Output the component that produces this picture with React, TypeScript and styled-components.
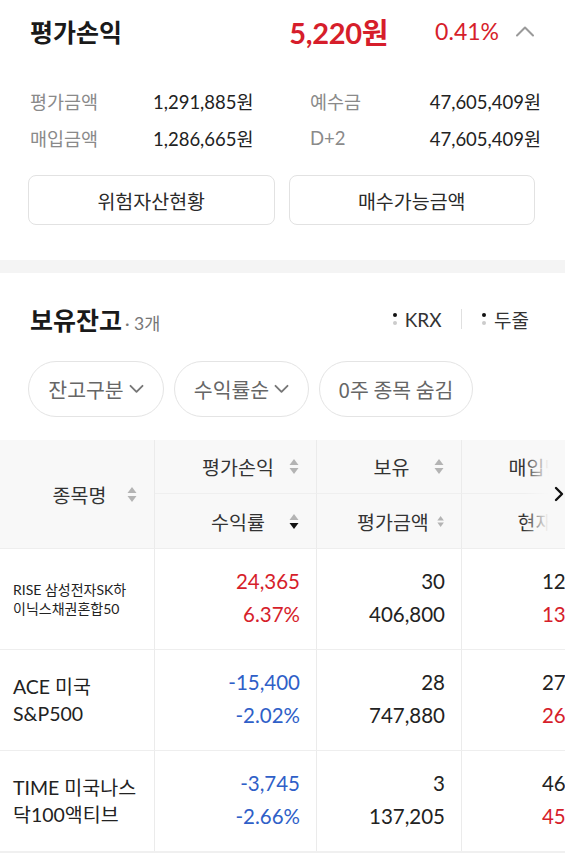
import React from 'react';
import styled, { createGlobalStyle } from 'styled-components';

const GlobalStyle = createGlobalStyle`
  html, body {
    margin: 0;
    padding: 0;
    background: #ffffff;
  }
  body {
    font-family: 'Lato', 'Noto Sans CJK KR', sans-serif;
    color: #222222;
    -webkit-font-smoothing: antialiased;
  }
`;

const RED = '#d61e2b';
const BLUE = '#2f5fc8';

const Page = styled.div`
  width: 565px;
  overflow: hidden;
`;

const Summary = styled.section`
  padding: 0 30px 35px 28px;
`;

const SummaryHead = styled.div`
  height: 62px;
  display: flex;
  align-items: center;
`;

const Title = styled.h2`
  flex: 1;
  margin: 0;
  padding-left: 2px;
  font-size: 25px;
  font-weight: 700;
  color: #1a1a1a;
`;

const ProfitAmount = styled.span`
  font-size: 29px;
  font-weight: 700;
  color: ${RED};
  letter-spacing: -0.3px;
`;

const ProfitRate = styled.span`
  margin-left: 47px;
  font-size: 23px;
  color: ${RED};
`;

const Collapse = styled.span`
  margin-left: 16px;
  display: flex;
  align-items: center;
`;

const Stats = styled.div`
  margin: 20px -6px 0 0;
  display: grid;
  grid-template-columns: 125px 155px 1fr auto;
  grid-auto-rows: 37px;
  align-items: center;
  font-size: 18.5px;
`;

const StatLabel = styled.span`
  padding-left: 2px;
  color: #8a8a8a;
`;

const StatValue = styled.span<{ $right?: boolean }>`
  color: #222222;
  text-align: ${(p) => (p.$right ? 'right' : 'left')};
`;

const ButtonRow = styled.div`
  margin-top: 19px;
  display: grid;
  grid-template-columns: 1fr 1fr;
  gap: 14px;
`;

const OutlineButton = styled.button`
  height: 50px;
  border: 1.5px solid #e2e2e2;
  border-radius: 8px;
  background: #ffffff;
  font-family: 'Noto Sans CJK KR', sans-serif;
  font-size: 19.5px;
  color: #2a2a2a;
`;

const Divider = styled.div`
  height: 13px;
  background: #f4f4f4;
`;

const HoldingsHead = styled.div`
  margin-top: 26px;
  padding: 0 36px 0 30px;
  height: 40px;
  display: flex;
  align-items: center;
`;

const HoldingsTitle = styled.h3`
  margin: 0;
  font-size: 25px;
  font-weight: 700;
  color: #1a1a1a;
`;

const Count = styled.span`
  margin-left: 3px;
  margin-top: 6px;
  font-size: 17.5px;
  color: #777777;
  flex: 1;
`;

const Toggle = styled.span`
  display: flex;
  align-items: center;
  gap: 8px;
  font-size: 19px;
  color: #333333;
`;

const Dots = styled.span`
  display: flex;
  flex-direction: column;
  gap: 4px;
  &::before, &::after {
    content: '';
    width: 4px;
    height: 4px;
    border-radius: 50%;
    background: #111111;
  }
  &::after {
    background: #cccccc;
  }
`;

const VBar = styled.span`
  width: 1.5px;
  height: 20px;
  margin: 0 20px 0 19px;
  background: #e0e0e0;
`;

const Chips = styled.div`
  margin-top: 22px;
  padding-left: 28px;
  display: flex;
  gap: 10px;
`;

const Chip = styled.button<{ $w: number }>`
  width: ${(p) => p.$w}px;
  height: 56px;
  border: 1.5px solid #e4e4e4;
  border-radius: 28px;
  background: #ffffff;
  display: flex;
  align-items: center;
  justify-content: center;
  gap: 5px;
  font-family: 'Noto Sans CJK KR', sans-serif;
  font-size: 20.5px;
  color: #666666;
`;

const TableWrap = styled.div`
  position: relative;
  margin-top: 23px;
  overflow: hidden;
  border-bottom: 2px solid #f0f0f0;
`;

const Grid = styled.div`
  display: grid;
  width: 623px;
  grid-template-columns: 155px 162px 145px 161px;
`;

const HeadCell = styled.div<{ $span?: boolean; $top?: boolean }>`
  grid-row: ${(p) => (p.$span ? 'span 2' : 'auto')};
  height: ${(p) => (p.$span ? 108 : 54)}px;
  box-sizing: border-box;
  padding: 0 17px 0 40px;
  display: flex;
  align-items: center;
  gap: 8px;
  background: #f8f8f8;
  border-right: 1.5px solid #ebebeb;
  border-bottom: ${(p) => (p.$top ? '1px solid #efefef' : 'none')};
  font-family: 'Noto Sans CJK KR', sans-serif;
  font-size: 19.5px;
  color: #333333;
  white-space: nowrap;
`;

const HeadLabel = styled.span`
  flex: 1;
  text-align: center;
`;

const Fade = styled.div`
  position: absolute;
  top: 0;
  right: 0;
  width: 40px;
  height: 108px;
  background: linear-gradient(to right, rgba(248, 248, 248, 0), #f8f8f8 60%);
  display: flex;
  align-items: center;
  justify-content: flex-end;
  padding-right: 1px;
`;

const NameCell = styled.div<{ $small?: boolean }>`
  height: 101px;
  box-sizing: border-box;
  padding: 0 8px 0 13px;
  display: flex;
  align-items: center;
  border-right: 1.5px solid #ebebeb;
  border-top: 1.5px solid #eeeeee;
  font-size: ${(p) => (p.$small ? 14 : 19.5)}px;
  line-height: ${(p) => (p.$small ? 19 : 27)}px;
  color: #222222;
`;

const ValueCell = styled.div`
  height: 101px;
  box-sizing: border-box;
  padding: 0 16px 2px 0;
  display: flex;
  flex-direction: column;
  justify-content: center;
  align-items: flex-end;
  border-right: 1.5px solid #ebebeb;
  border-top: 1.5px solid #eeeeee;
  font-size: 20.5px;
  line-height: 33px;
`;

const Num = styled.span<{ $tone?: 'up' | 'down' }>`
  color: ${(p) => (p.$tone === 'up' ? RED : p.$tone === 'down' ? BLUE : '#222222')};
  white-space: nowrap;
`;

const ChevronUp = () => (
  <svg width="20" height="12" viewBox="0 0 20 12" fill="none">
    <path d="M2 10.5L10 2.5L18 10.5" stroke="#9a9a9a" strokeWidth="2" strokeLinecap="round" strokeLinejoin="round" />
  </svg>
);

const ChevronDown = () => (
  <svg width="15" height="10" viewBox="0 0 15 10" fill="none">
    <path d="M1.5 1.8L7.5 7.8L13.5 1.8" stroke="#777777" strokeWidth="1.9" strokeLinecap="round" strokeLinejoin="round" />
  </svg>
);

const ChevronRight = () => (
  <svg width="10" height="16" viewBox="0 0 10 16" fill="none">
    <path d="M2 2L8 8L2 14" stroke="#111111" strokeWidth="2.4" strokeLinecap="round" strokeLinejoin="round" />
  </svg>
);

const SortIcon = ({ active }: { active?: 'down' }) => (
  <svg width="10" height="17" viewBox="0 0 10 17">
    <path d="M5 1L9.5 7H0.5Z" fill="#b4b4b4" />
    <path d="M5 16L9.5 10H0.5Z" fill={active === 'down' ? '#111111' : '#b4b4b4'} />
  </svg>
);

type Holding = {
  name: string[];
  small?: boolean;
  pl: string;
  rate: string;
  qty: string;
  value: string;
  buy: string;
  now: string;
  tone: 'up' | 'down';
  nowTone: 'up' | 'down';
};

const holdings: Holding[] = [
  { name: ['RISE 삼성전자SK하', '이닉스채권혼합50'], small: true, pl: '24,365', rate: '6.37%', qty: '30', value: '406,800', buy: '12,748', now: '13,560', tone: 'up', nowTone: 'up' },
  { name: ['ACE 미국', 'S&P500'], pl: '-15,400', rate: '-2.02%', qty: '28', value: '747,880', buy: '27,260', now: '26,710', tone: 'down', nowTone: 'up' },
  { name: ['TIME 미국나스', '닥100액티브'], pl: '-3,745', rate: '-2.66%', qty: '3', value: '137,205', buy: '46,983', now: '45,735', tone: 'down', nowTone: 'up' },
];

export default function App() {
  return (
    <Page>
      <GlobalStyle />
      <Summary>
        <SummaryHead>
          <Title>평가손익</Title>
          <ProfitAmount>5,220원</ProfitAmount>
          <ProfitRate>0.41%</ProfitRate>
          <Collapse>
            <ChevronUp />
          </Collapse>
        </SummaryHead>
        <Stats>
          <StatLabel>평가금액</StatLabel>
          <StatValue>1,291,885원</StatValue>
          <StatLabel>예수금</StatLabel>
          <StatValue $right>47,605,409원</StatValue>
          <StatLabel>매입금액</StatLabel>
          <StatValue>1,286,665원</StatValue>
          <StatLabel>D+2</StatLabel>
          <StatValue $right>47,605,409원</StatValue>
        </Stats>
        <ButtonRow>
          <OutlineButton>위험자산현황</OutlineButton>
          <OutlineButton>매수가능금액</OutlineButton>
        </ButtonRow>
      </Summary>
      <Divider />
      <HoldingsHead>
        <HoldingsTitle>보유잔고</HoldingsTitle>
        <Count>· 3개</Count>
        <Toggle>
          <Dots />
          KRX
        </Toggle>
        <VBar />
        <Toggle>
          <Dots />
          두줄
        </Toggle>
      </HoldingsHead>
      <Chips>
        <Chip $w={136}>
          잔고구분 <ChevronDown />
        </Chip>
        <Chip $w={135}>
          수익률순 <ChevronDown />
        </Chip>
        <Chip $w={154}>0주 종목 숨김</Chip>
      </Chips>
      <TableWrap>
        <Grid>
          <HeadCell $span>
            <HeadLabel>종목명</HeadLabel>
            <SortIcon />
          </HeadCell>
          <HeadCell $top>
            <HeadLabel>평가손익</HeadLabel>
            <SortIcon />
          </HeadCell>
          <HeadCell $top>
            <HeadLabel>보유</HeadLabel>
            <SortIcon />
          </HeadCell>
          <HeadCell $top>
            <HeadLabel>매입단가</HeadLabel>
            <SortIcon />
          </HeadCell>
          <HeadCell>
            <HeadLabel>수익률</HeadLabel>
            <SortIcon active="down" />
          </HeadCell>
          <HeadCell>
            <HeadLabel>평가금액</HeadLabel>
            <SortIcon />
          </HeadCell>
          <HeadCell>
            <HeadLabel>현재가</HeadLabel>
            <SortIcon />
          </HeadCell>
          {holdings.map((h) => (
            <React.Fragment key={h.name.join('')}>
              <NameCell $small={h.small}>
                <div>
                  {h.name[0]}
                  <br />
                  {h.name[1]}
                </div>
              </NameCell>
              <ValueCell>
                <Num $tone={h.tone}>{h.pl}</Num>
                <Num $tone={h.tone}>{h.rate}</Num>
              </ValueCell>
              <ValueCell>
                <Num>{h.qty}</Num>
                <Num>{h.value}</Num>
              </ValueCell>
              <ValueCell>
                <Num>{h.buy}</Num>
                <Num $tone={h.nowTone}>{h.now}</Num>
              </ValueCell>
            </React.Fragment>
          ))}
        </Grid>
        <Fade>
          <ChevronRight />
        </Fade>
      </TableWrap>
    </Page>
  );
}
